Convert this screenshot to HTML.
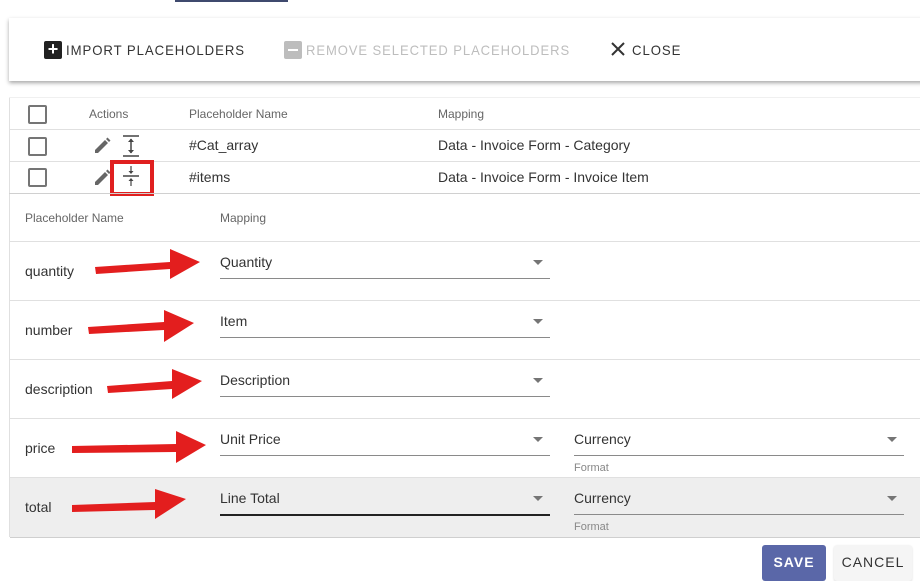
<!DOCTYPE html>
<html><head><style>
body{margin:0;width:920px;height:578px;background:#fff;position:relative;overflow:hidden;font-family:"Liberation Sans",sans-serif;color:#333}
.a{position:absolute}
.t{font-size:14px;color:#333}
.h{font-size:12px;color:#666}
.hl{position:absolute;height:1px;background:#e0e0e0}
.cb{position:absolute;width:15px;height:15px;border:2px solid #757575;border-radius:2px}
.ul{position:absolute;height:1px;background:#8a8a8a}
.dd{position:absolute;width:0;height:0;border-left:5px solid transparent;border-right:5px solid transparent;border-top:5px solid #757575}
.tb{position:absolute;top:42px;font-size:14px;letter-spacing:1px;transform-origin:0 0;white-space:nowrap}
</style></head><body>
<div class="a" style="left:175px;top:0;width:113px;height:2px;background:#3f4a6e"></div>
<div class="a" style="left:9px;top:18px;width:920px;height:63px;background:#fff;box-shadow:0 2px 4px rgba(0,0,0,.35)"></div>
<div class="a" style="left:44px;top:41px;width:18px;height:18px;background:#212121;border-radius:2px;color:#fff;font-size:18px;line-height:17px;text-align:center;font-weight:bold">+</div>
<div class="tb" style="left:66px;color:#333;transform:scaleX(0.94)">IMPORT PLACEHOLDERS</div>
<div class="a" style="left:284px;top:41px;width:18px;height:18px;background:#bdbdbd;border-radius:2px"><div class="a" style="left:4px;top:8px;width:10px;height:2px;background:#fff"></div></div>
<div class="tb" style="left:306px;color:#bdbdbd;transform:scaleX(0.93)">REMOVE SELECTED PLACEHOLDERS</div>
<svg class="a" style="left:610px;top:41px" width="16" height="16"><path d="M2 2L14 14M14 2L2 14" stroke="#333" stroke-width="2"/></svg>
<div class="tb" style="left:632px;color:#333;transform:scaleX(0.94)">CLOSE</div>

<div class="a" style="left:9px;top:97px;width:1px;height:440px;background:#e0e0e0"></div>
<div class="a" style="left:9px;top:97px;width:911px;height:1px;background:#f0f0f0"></div>
<div class="cb" style="left:28px;top:105px"></div>
<div class="a h" style="left:89px;top:107px">Actions</div>
<div class="a h" style="left:189px;top:107px">Placeholder Name</div>
<div class="a h" style="left:438px;top:107px">Mapping</div>
<div class="hl" style="left:9px;top:129px;width:911px"></div>
<div class="cb" style="left:28px;top:137px"></div>
<svg class="a" style="left:92px;top:136px" width="20" height="20"><path d="M3 17V14L13 4L16 7L6 17Z M14 3L15.5 1.5L18.5 4.5L17 6Z" fill="#666"/></svg>
<svg class="a" style="left:122px;top:135px" width="18" height="22"><path d="M1 1H17M1 21H17" stroke="#444" stroke-width="1.5"/><path d="M9 4V18" stroke="#444" stroke-width="1.5"/><path d="M6 7L9 3.5L12 7ZM6 15L9 18.5L12 15Z" fill="#444"/></svg>
<div class="a t" style="left:189px;top:137px">#Cat_array</div>
<div class="a t" style="left:438px;top:137px">Data - Invoice Form - Category</div>
<div class="hl" style="left:9px;top:161px;width:911px"></div>
<div class="cb" style="left:28px;top:168px"></div>
<svg class="a" style="left:92px;top:168px" width="20" height="20"><path d="M3 17V14L13 4L16 7L6 17Z M14 3L15.5 1.5L18.5 4.5L17 6Z" fill="#666"/></svg>
<div class="a" style="left:110px;top:160px;width:36px;height:28px;border:4px solid #e02020"></div>
<svg class="a" style="left:122px;top:165px" width="18" height="22"><path d="M1 11H17" stroke="#444" stroke-width="1.5"/><path d="M9 1V7M9 15V21" stroke="#444" stroke-width="1.2"/><path d="M6.5 6L9 9L11.5 6ZM6.5 16L9 13L11.5 16Z" fill="#444"/></svg>
<div class="a t" style="left:189px;top:169px">#items</div>
<div class="a t" style="left:438px;top:169px">Data - Invoice Form - Invoice Item</div>
<div class="hl" style="left:9px;top:193px;width:911px;background:#d0d0d0"></div>

<div class="a h" style="left:25px;top:211px">Placeholder Name</div>
<div class="a h" style="left:220px;top:211px">Mapping</div>
<div class="hl" style="left:9px;top:241px;width:911px"></div>
<div class="hl" style="left:9px;top:300px;width:911px"></div>
<div class="hl" style="left:9px;top:359px;width:911px"></div>
<div class="hl" style="left:9px;top:418px;width:911px"></div>
<div class="a" style="left:10px;top:477px;width:910px;height:59px;background:#eeeeee;border-top:1px solid #e0e0e0;border-bottom:1px solid #cfcfcf"></div>

<div class="a t" style="left:25px;top:263px">quantity</div>
<div class="a t" style="left:220px;top:254px">Quantity</div>
<div class="ul" style="left:220px;top:278px;width:330px"></div><div class="dd" style="left:533px;top:260px"></div>
<div class="a t" style="left:25px;top:322px">number</div>
<div class="a t" style="left:220px;top:313px">Item</div>
<div class="ul" style="left:220px;top:337px;width:330px"></div><div class="dd" style="left:533px;top:319px"></div>
<div class="a t" style="left:25px;top:381px">description</div>
<div class="a t" style="left:220px;top:372px">Description</div>
<div class="ul" style="left:220px;top:396px;width:330px"></div><div class="dd" style="left:533px;top:378px"></div>
<div class="a t" style="left:25px;top:440px">price</div>
<div class="a t" style="left:220px;top:431px">Unit Price</div>
<div class="ul" style="left:220px;top:455px;width:330px"></div><div class="dd" style="left:533px;top:437px"></div>
<div class="a t" style="left:574px;top:431px">Currency</div>
<div class="ul" style="left:574px;top:455px;width:330px"></div><div class="dd" style="left:887px;top:437px"></div>
<div class="a" style="left:574px;top:462px;font-size:11px;color:#888">Format</div>
<div class="a t" style="left:25px;top:499px">total</div>
<div class="a t" style="left:220px;top:490px">Line Total</div>
<div class="ul" style="left:220px;top:514px;width:330px;height:2px;background:#222"></div><div class="dd" style="left:533px;top:496px"></div>
<div class="a t" style="left:574px;top:490px">Currency</div>
<div class="ul" style="left:574px;top:514px;width:330px"></div><div class="dd" style="left:887px;top:496px"></div>
<div class="a" style="left:574px;top:521px;font-size:11px;color:#888">Format</div>

<svg class="a" style="left:0;top:0" width="920" height="578">
<g fill="#e31e1e">
<polygon points="95,267 170,262 170,249 200,262 170,279 170,269 96,274"/>
<polygon points="88,327 164,322 164,310 194,323 164,342 164,330 89,334"/>
<polygon points="107,386 172,381 172,369 202,381 172,399 172,389 108,393"/>
<polygon points="72,446 176,444 176,431 206,445 176,463 176,452 72,453"/>
<polygon points="72,505 155,502 155,489 186,499 155,519 155,510 72,512"/>
</g></svg>

<div class="a" style="left:762px;top:545px;width:64px;height:36px;background:#5a67a8;border-radius:3px;color:#fff;font-size:14px;font-weight:bold;letter-spacing:1px;text-align:center;line-height:34px">SAVE</div>
<div class="a" style="left:834px;top:545px;width:78px;height:36px;background:#f5f5f5;border-radius:3px;color:#333;font-size:14px;letter-spacing:1px;text-align:center;line-height:34px;box-shadow:0 1px 2px rgba(0,0,0,.15)">CANCEL</div>
</body></html>
